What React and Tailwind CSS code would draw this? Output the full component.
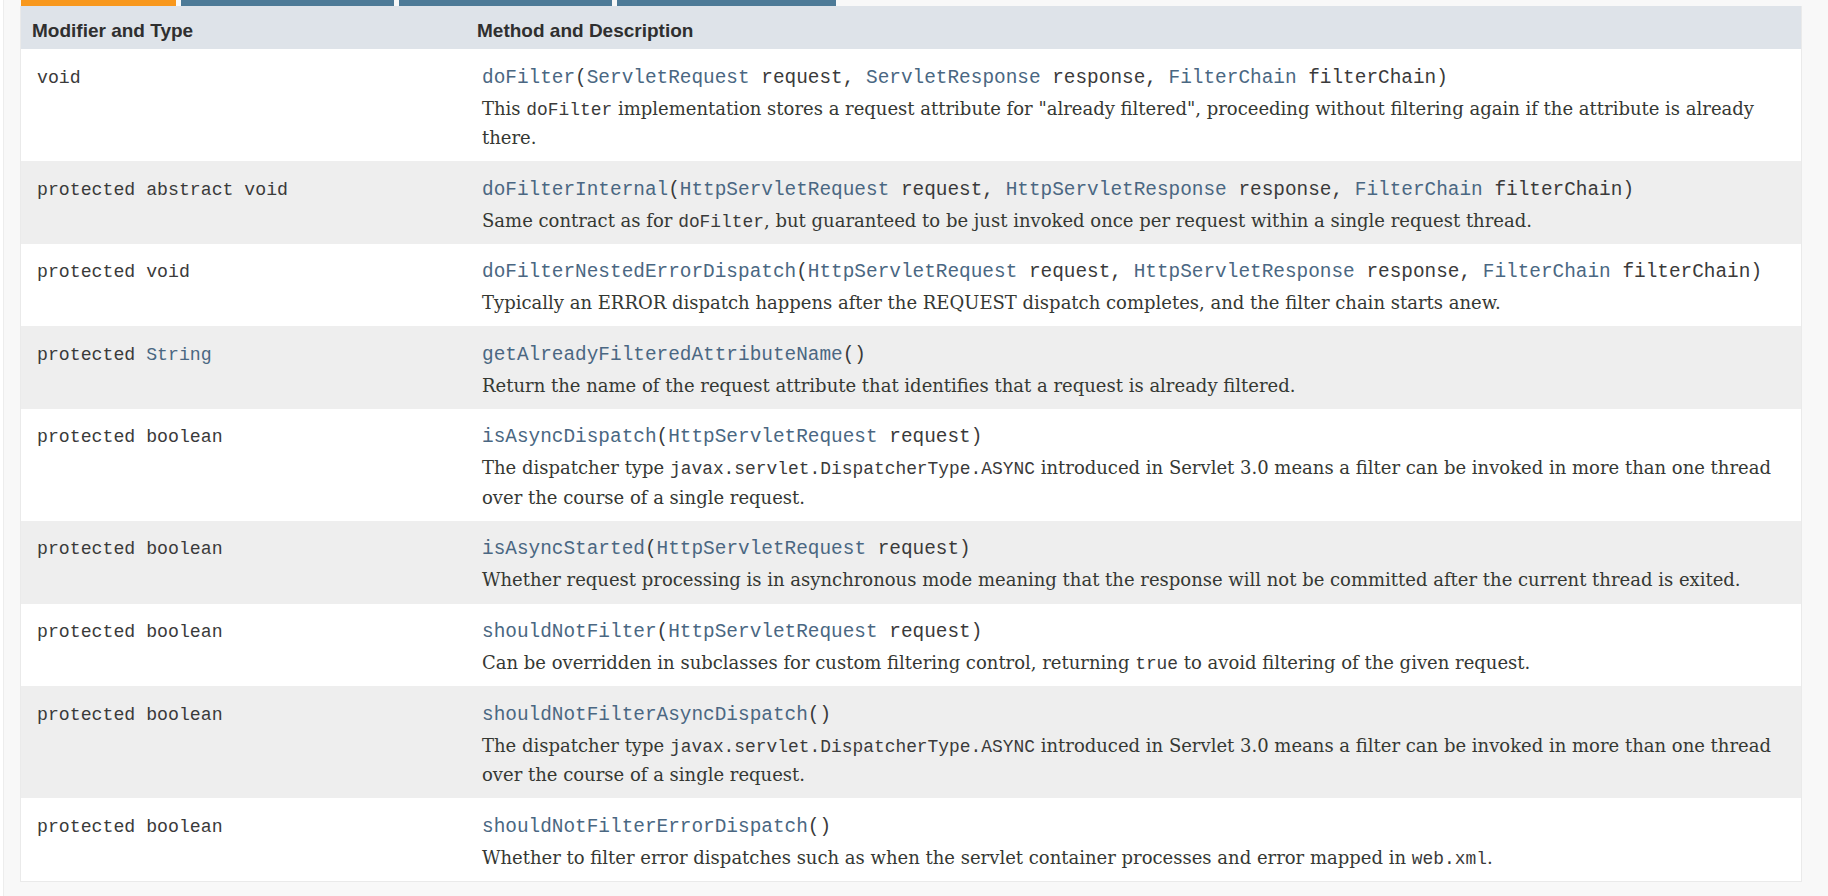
import React from "react";

const mono = "font-['Liberation_Mono','DejaVu_Sans_Mono',monospace]";
const serif = "font-['DejaVu_Serif','Liberation_Serif',serif]";

// code parts: [text, isLink]
const rows = [
  {
    type: [["void", false]],
    sig: [
      ["doFilter", true], ["(", false], ["ServletRequest", true], [" request, ", false],
      ["ServletResponse", true], [" response, ", false], ["FilterChain", true], [" filterChain)", false],
    ],
    desc: [
      ["This ", ["doFilter"], " implementation stores a request attribute for \"already filtered\", proceeding without filtering again if the attribute is already"],
      ["there."],
    ],
  },
  {
    type: [["protected abstract void", false]],
    sig: [
      ["doFilterInternal", true], ["(", false], ["HttpServletRequest", true], [" request, ", false],
      ["HttpServletResponse", true], [" response, ", false], ["FilterChain", true], [" filterChain)", false],
    ],
    desc: [["Same contract as for ", ["doFilter"], ", but guaranteed to be just invoked once per request within a single request thread."]],
  },
  {
    type: [["protected void", false]],
    sig: [
      ["doFilterNestedErrorDispatch", true], ["(", false], ["HttpServletRequest", true], [" request, ", false],
      ["HttpServletResponse", true], [" response, ", false], ["FilterChain", true], [" filterChain)", false],
    ],
    desc: [["Typically an ERROR dispatch happens after the REQUEST dispatch completes, and the filter chain starts anew."]],
  },
  {
    type: [["protected ", false], ["String", true]],
    sig: [["getAlreadyFilteredAttributeName", true], ["()", false]],
    desc: [["Return the name of the request attribute that identifies that a request is already filtered."]],
  },
  {
    type: [["protected boolean", false]],
    sig: [["isAsyncDispatch", true], ["(", false], ["HttpServletRequest", true], [" request)", false]],
    desc: [
      ["The dispatcher type ", ["javax.servlet.DispatcherType.ASYNC"], " introduced in Servlet 3.0 means a filter can be invoked in more than one thread"],
      ["over the course of a single request."],
    ],
  },
  {
    type: [["protected boolean", false]],
    sig: [["isAsyncStarted", true], ["(", false], ["HttpServletRequest", true], [" request)", false]],
    desc: [["Whether request processing is in asynchronous mode meaning that the response will not be committed after the current thread is exited."]],
  },
  {
    type: [["protected boolean", false]],
    sig: [["shouldNotFilter", true], ["(", false], ["HttpServletRequest", true], [" request)", false]],
    desc: [["Can be overridden in subclasses for custom filtering control, returning ", ["true"], " to avoid filtering of the given request."]],
  },
  {
    type: [["protected boolean", false]],
    sig: [["shouldNotFilterAsyncDispatch", true], ["()", false]],
    desc: [
      ["The dispatcher type ", ["javax.servlet.DispatcherType.ASYNC"], " introduced in Servlet 3.0 means a filter can be invoked in more than one thread"],
      ["over the course of a single request."],
    ],
  },
  {
    type: [["protected boolean", false]],
    sig: [["shouldNotFilterErrorDispatch", true], ["()", false]],
    desc: [["Whether to filter error dispatches such as when the servlet container processes and error mapped in ", ["web.xml"], "."]],
  },
];

const Code = ({ parts }) =>
  parts.map(([text, link], i) => (
    <span key={i} className={link ? "text-[#4a6782]" : "text-[#3a3a3a]"}>
      {text}
    </span>
  ));

const DescLine = ({ line }) => (
  <div className="h-[29.5px] whitespace-nowrap">
    {line.map((part, i) =>
      Array.isArray(part) ? (
        <span key={i} className={`${mono} text-[17.9px] leading-none text-[#3a3a3a]`}>
          {part[0]}
        </span>
      ) : (
        <span key={i}>{part}</span>
      )
    )}
  </div>
);

const tabs = [
  { w: "w-[155px]", color: "bg-[#f8981d]" },
  { w: "w-[213px]", color: "bg-[#4d7a97]" },
  { w: "w-[213px]", color: "bg-[#4d7a97]" },
  { w: "w-[219px]", color: "bg-[#4d7a97]" },
];

export default function App() {
  return (
    <div className="min-h-[896px] bg-white pl-[3px]">
      <div className="min-h-[896px] border-l border-[#ededed] bg-[#f8f8f8] pl-[16px] pr-[26px]">
        <div className="flex h-[6px] pl-px">
          {tabs.map((t, i) => (
            <div key={i} className={`${t.w} ${t.color} mr-[5px] h-full`} />
          ))}
        </div>

        <div className="border-x border-b border-[#eaeaea]">
          <div className="flex h-[43px] bg-[#dee3e9] pt-[15px] font-['Liberation_Sans',Arial,sans-serif] text-[19px] leading-[20px] font-bold text-[#2f2f2f]">
            <div className="w-[445px] pl-[11px]">Modifier and Type</div>
            <div className="pl-[11px]">Method and Description</div>
          </div>

          {rows.map((row, i) => (
            <div
              key={i}
              className={`flex ${i % 2 === 0 ? "bg-white" : "bg-[#eeeeee]"}`}
            >
              <div className={`w-[445px] shrink-0 pl-[16px] pt-[13.5px] ${mono} text-[18.2px] leading-[30px]`}>
                <Code parts={row.type} />
              </div>
              <div className="min-w-0 flex-1 pl-[16px] pt-[13.5px] pb-[8.6px]">
                <div className={`h-[30px] ${mono} text-[19.4px] leading-[30px] whitespace-nowrap`}>
                  <Code parts={row.sig} />
                </div>
                <div className={`mt-px ${serif} text-[18px] leading-[29.5px] text-[#353833]`}>
                  {row.desc.map((line, j) => (
                    <DescLine key={j} line={line} />
                  ))}
                </div>
              </div>
            </div>
          ))}
        </div>
      </div>
    </div>
  );
}
